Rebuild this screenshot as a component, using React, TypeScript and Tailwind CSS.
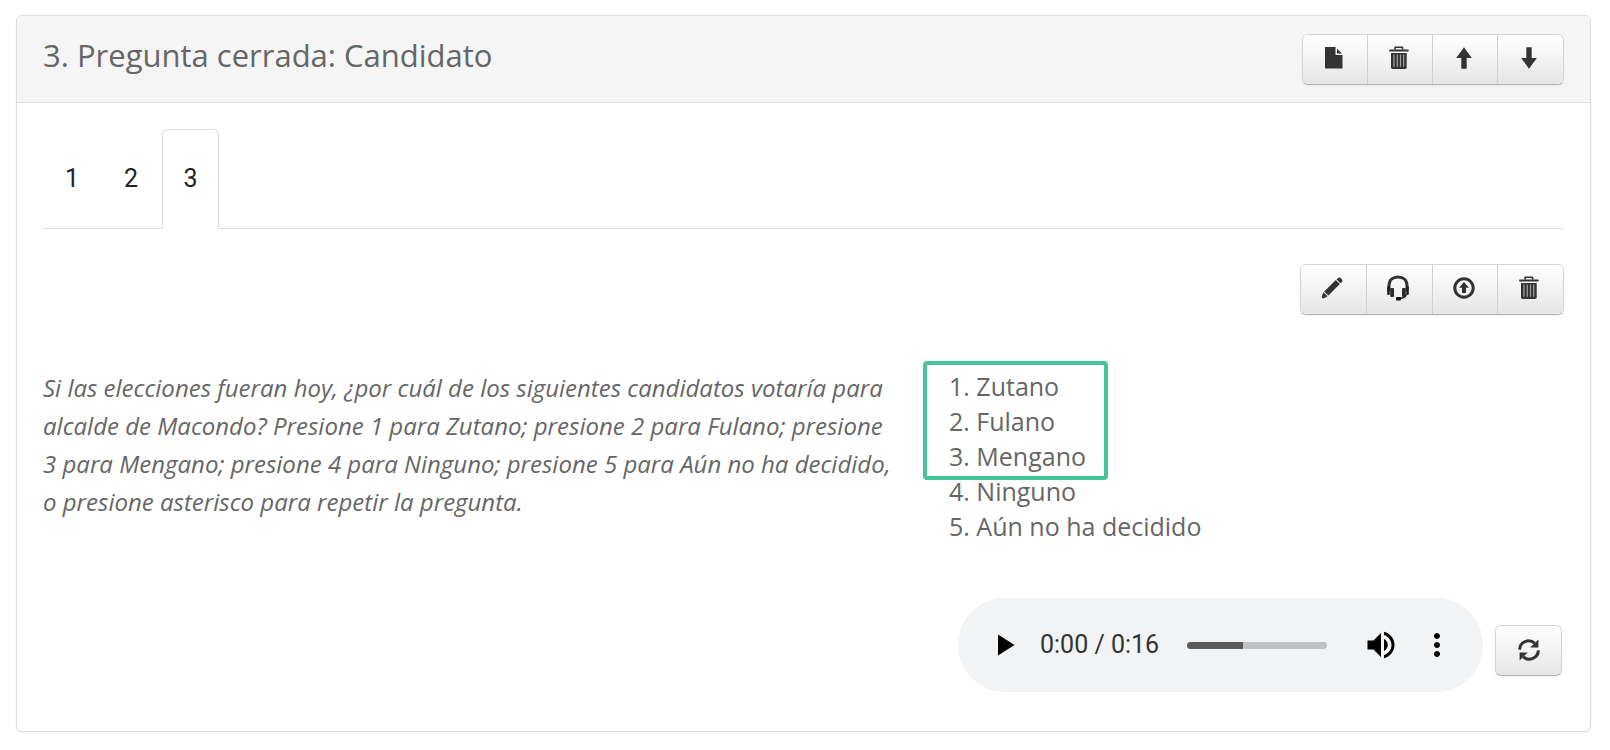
import type { ReactNode } from 'react';
import { MdMoreVert, MdPlayArrow, MdVolumeUp } from 'react-icons/md';

const buttonFace =
  'flex items-center justify-center bg-linear-to-b from-white to-[#e6e6e6] text-[#333333]';

function FileIcon() {
  return (
    <svg width="18" height="22" viewBox="0 0 18 22" fill="currentColor" aria-hidden="true">
      <path d="M0 0H10.5V8H17.5V21.5H0Z" />
      <path d="M12 1.8L17 6.6H12Z" />
    </svg>
  );
}

function TrashIcon() {
  return (
    <svg width="20" height="24" viewBox="0 0 20 24" fill="currentColor" aria-hidden="true">
      <path d="M5.2 3.6V1.6Q5.2.4 6.4.4H13.2Q14.4.4 14.4 1.6V3.6H12.7V2H6.9V3.6Z" />
      <rect x="0.2" y="3.5" width="19.4" height="2" rx="0.5" />
      <path d="M2 7H17.7V21.2Q17.7 23 15.9 23H3.8Q2 23 2 21.2Z" />
      <path
        d="M5 8.6V20.8M8.3 8.6V20.8M11.5 8.6V20.8M14.7 8.6V20.8"
        stroke="#a3a3a3"
        strokeWidth="1.2"
        fill="none"
      />
    </svg>
  );
}

function ArrowIcon({ down = false }: { down?: boolean }) {
  return (
    <svg width="16" height="22" viewBox="0 0 16 22" fill="currentColor" aria-hidden="true">
      {down ? (
        <path d="M5.3 0.3H10.7V11H15.8L8 21.7L0.2 11H5.3Z" />
      ) : (
        <path d="M8 0.3L15.8 11H10.7V21.7H5.3V11H0.2Z" />
      )}
    </svg>
  );
}

function PencilIcon() {
  return (
    <svg width="22" height="22" viewBox="0 0 22 22" fill="currentColor" aria-hidden="true">
      <path d="M15.6 2.4L17.3 0.8Q18.4 0 19.5 1L21 2.5Q22 3.6 21.1 4.7L19.5 6.3Z" />
      <path d="M14.8 3.1L18.8 7.1L7.4 18.6L3.2 14.4Z" />
      <path d="M2.6 15.2L6.6 19.2L4 20.8Q0 22.6 1 18.4Z" />
    </svg>
  );
}

function HeadsetIcon() {
  return (
    <svg width="22" height="26" viewBox="0 0 22 26" aria-hidden="true">
      <path d="M2 16V10.5C2 5 6 1.9 11 1.9S20 5 20 10.5V16" fill="none" stroke="#333333" strokeWidth="3" />
      <rect x="0.2" y="11" width="2.6" height="9" rx="1" fill="#1f1f1f" />
      <rect x="3.2" y="13" width="3.8" height="9" rx="1" fill="#2b2b2b" />
      <rect x="15" y="13" width="3.8" height="9" rx="1" fill="#2b2b2b" />
      <rect x="19.2" y="11" width="2.6" height="9" rx="1" fill="#1f1f1f" />
      <path d="M19.4 19.5Q18 23 13 23.4" fill="none" stroke="#333333" strokeWidth="1.8" />
      <rect x="9" y="22" width="5" height="3.4" rx="1" fill="#111111" />
    </svg>
  );
}

function UploadIcon() {
  return (
    <svg width="22" height="22" viewBox="0 0 22 22" aria-hidden="true">
      <circle cx="11" cy="11" r="9.2" fill="none" stroke="currentColor" strokeWidth="3" />
      <path d="M11 5L16 10.8H13V16H9V10.8H6Z" fill="currentColor" />
    </svg>
  );
}

function RefreshIcon() {
  return (
    <svg width="22" height="22" viewBox="0 0 22 22" aria-hidden="true">
      <path d="M1.6 10.6A9 9 0 0 1 16.6 4.2" fill="none" stroke="currentColor" strokeWidth="3" />
      <path d="M20.4 0.4V8.6H12.2Z" fill="currentColor" />
      <path d="M20.4 11.4A9 9 0 0 1 5.4 17.8" fill="none" stroke="currentColor" strokeWidth="3" />
      <path d="M1.6 21.6V13.4H9.8Z" fill="currentColor" />
    </svg>
  );
}

type Action = { label: string; icon: ReactNode; wide?: boolean };

const questionActions: Action[] = [
  { label: 'Duplicar', icon: <FileIcon /> },
  { label: 'Eliminar pregunta', icon: <TrashIcon /> },
  { label: 'Subir', icon: <ArrowIcon /> },
  { label: 'Bajar', icon: <ArrowIcon down /> },
];

const audioActions: Action[] = [
  { label: 'Editar', icon: <PencilIcon />, wide: true },
  { label: 'Grabar', icon: <HeadsetIcon />, wide: true },
  { label: 'Cargar audio', icon: <UploadIcon /> },
  { label: 'Eliminar audio', icon: <TrashIcon /> },
];

function ButtonGroup({ actions }: { actions: Action[] }) {
  return (
    <div className="flex divide-x divide-[#d0d0d0] overflow-hidden rounded-md border border-[#d4d4d4] border-b-[#b3b3b3] shadow-xs">
      {actions.map((action) => (
        <button
          key={action.label}
          type="button"
          aria-label={action.label}
          className={`${buttonFace} h-[49px] pr-[3px] pb-[3px] ${action.wide ? 'w-[66px]' : 'w-[65px]'}`}
        >
          {action.icon}
        </button>
      ))}
    </div>
  );
}

const tabs = ['1', '2', '3'];
const options = ['Zutano', 'Fulano', 'Mengano', 'Ninguno', 'Aún no ha decidido'];

export default function App() {
  return (
    <main className="bg-white pt-[15px] pr-[19px] pb-[18px] pl-4 font-['Open_Sans',sans-serif] text-[#666666]">
      <section className="rounded-md border border-[#dddddd] bg-white shadow-xs">
        <header className="flex items-start justify-between rounded-t-md border-b border-[#dddddd] bg-[#f5f5f5] px-[26px] pt-[18px] pb-[17px]">
          <h1 className="text-[31px] leading-[42px]">3. Pregunta cerrada: Candidato</h1>
          <ButtonGroup actions={questionActions} />
        </header>

        <div className="px-[26px] pt-[26px] pb-[39px]">
          <div
            role="tablist"
            className="flex border-b border-[#dddddd] pl-px font-[Roboto,sans-serif] text-[25px] text-[#222222]"
          >
            {tabs.map((tab) => (
              <button
                key={tab}
                type="button"
                role="tab"
                aria-selected={tab === '3'}
                className={
                  tab === '3'
                    ? '-mb-px h-[100px] w-[57px] rounded-t-md border border-b-0 border-[#dddddd] bg-white pb-px'
                    : 'mr-[3px] h-[99px] w-[56px]'
                }
              >
                {tab}
              </button>
            ))}
          </div>

          <div className="flex justify-end pt-[35px]">
            <ButtonGroup actions={audioActions} />
          </div>

          <div className="grid grid-cols-[57fr_43fr] pt-[54px]">
            <p className="pr-3 text-2xl leading-[38px] italic">
              Si las elecciones fueran hoy, ¿por cuál de los siguientes candidatos votaría para alcalde de
              Macondo? Presione 1 para Zutano; presione 2 para Fulano; presione 3 para Mengano; presione 4
              para Ninguno; presione 5 para Aún no ha decidido, o presione asterisco para repetir la pregunta.
            </p>
            <div className="pl-[39px]">
              <div className="relative">
                <ol className="list-inside list-decimal text-[25px] leading-[35px]">
                  {options.map((option) => (
                    <li key={option}>{option}</li>
                  ))}
                </ol>
                <div className="pointer-events-none absolute -top-2 -left-[26px] h-[119px] w-[185px] rounded-sm border-4 border-[#48c39c]" />
              </div>
            </div>
          </div>

          <div className="flex items-center justify-end gap-3 pt-[54px] pr-[2px]">
            <div className="flex h-[94px] w-[525px] items-center rounded-full bg-[#f1f3f4] px-7 text-black">
              <button type="button" aria-label="Reproducir">
                <MdPlayArrow size={36} />
              </button>
              <span className="ml-[18px] font-[Roboto,sans-serif] text-[25px] whitespace-nowrap text-[#333333]">
                0:00 / 0:16
              </span>
              <input
                type="range"
                aria-label="Posición"
                min={0}
                max={16}
                defaultValue={0}
                className="mx-7 h-[7px] min-w-0 flex-1 appearance-none rounded-full bg-[linear-gradient(to_right,#5a5a5a_40%,#c1c2c3_40%)] [&::-webkit-slider-thumb]:size-0 [&::-webkit-slider-thumb]:appearance-none"
              />
              <button type="button" aria-label="Volumen" className="ml-2">
                <MdVolumeUp size={36} />
              </button>
              <button type="button" aria-label="Más opciones" className="ml-5">
                <MdMoreVert size={36} />
              </button>
            </div>
            <button
              type="button"
              aria-label="Regenerar audio"
              className={`${buttonFace} mt-[10px] h-[51px] w-[67px] rounded-md border border-[#d4d4d4] border-b-[#b3b3b3] shadow-xs`}
            >
              <RefreshIcon />
            </button>
          </div>
        </div>
      </section>
    </main>
  );
}
